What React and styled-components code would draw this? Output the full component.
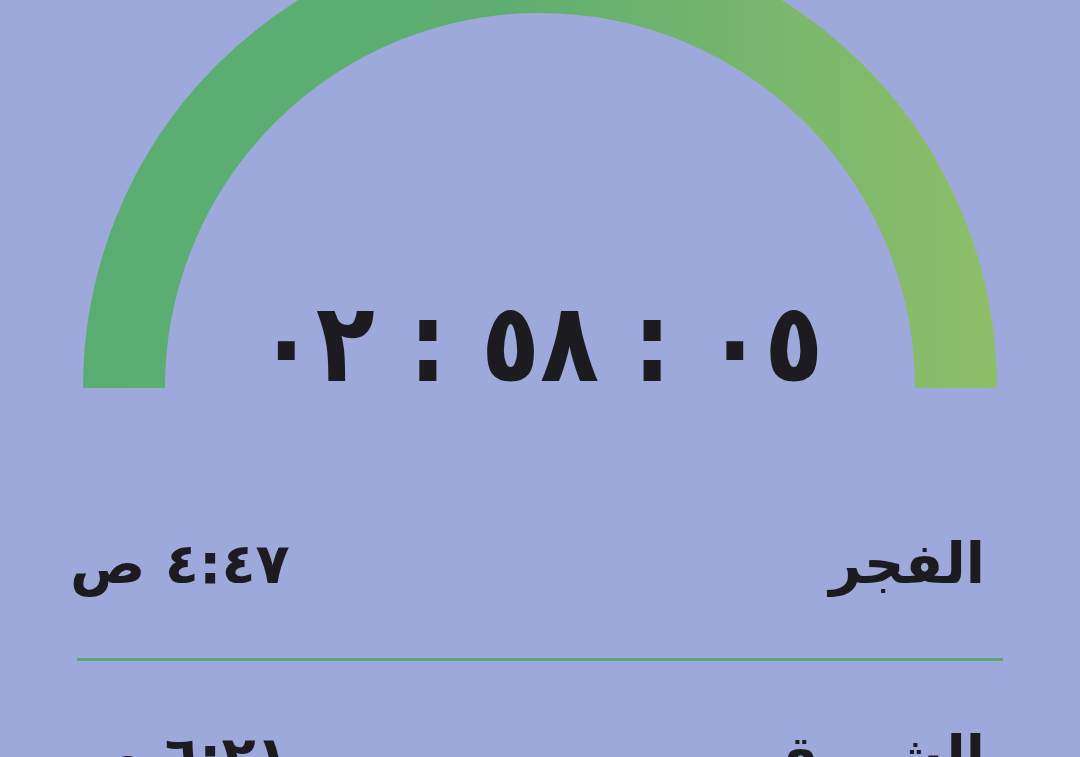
import React from "react";
import styled, { createGlobalStyle } from "styled-components";

const Global = createGlobalStyle`
  html, body {
    margin: 0;
    padding: 0;
    background: #9ea9db;
    overflow: hidden;
  }
  body {
    font-family: "DejaVu Sans", "Noto Sans", sans-serif;
    color: #1c1b20;
  }
`;

const Page = styled.div`
  width: 1080px;
  height: 757px;
  overflow: hidden;
  display: flex;
  flex-direction: column;
`;

const Gauge = styled.div`
  position: relative;
  height: 388px;
  flex-shrink: 0;

  svg {
    display: block;
  }
`;

const Countdown = styled.div`
  position: absolute;
  left: 0;
  right: 0;
  bottom: -10px;
  text-align: center;
  font-size: 110px;
  font-weight: 700;
  line-height: 1;
  direction: ltr;
  unicode-bidi: bidi-override;
  white-space: pre;
  transform: scaleX(0.88);
`;

const List = styled.div`
  direction: rtl;
  padding: 80px 77px 0;
  display: flex;
  flex-direction: column;
`;

const Row = styled.div`
  display: flex;
  justify-content: space-between;
  align-items: center;
  height: 190px;
  flex-shrink: 0;
  padding: 0 18px 0 0;
  margin-left: -7px;
`;

const Name = styled.span`
  font-size: 56px;
  font-weight: 700;
`;

const Time = styled.span`
  font-size: 56px;
  font-weight: 700;
`;

const Divider = styled.div`
  height: 3px;
  flex-shrink: 0;
  background: #5ea37c;
`;

const prayers = [
  { name: "الفجر", time: "٤:٤٧ ص" },
  { name: "الشروق", time: "٦:٢١ ص" },
];

export default function App() {
  return (
    <Page>
      <Global />
      <Gauge>
        <svg width="1080" height="388" viewBox="0 0 1080 388">
          <defs>
            <linearGradient id="arcGrad" x1="83" y1="0" x2="997" y2="0" gradientUnits="userSpaceOnUse">
              <stop offset="0" stopColor="#5aad72" />
              <stop offset="0.45" stopColor="#5eae71" />
              <stop offset="1" stopColor="#8ebe69" />
            </linearGradient>
          </defs>
          <path
            d="M 124 388 A 416 416 0 0 1 956 388"
            fill="none"
            stroke="url(#arcGrad)"
            strokeWidth="82"
          />
        </svg>
        <Countdown>{"٠٢ : ٥٨ : ٠٥"}</Countdown>
      </Gauge>
      <List>
        {prayers.map((p, i) => (
          <React.Fragment key={p.name}>
            {i > 0 && <Divider />}
            <Row>
              <Name>{p.name}</Name>
              <Time>{p.time}</Time>
            </Row>
          </React.Fragment>
        ))}
      </List>
    </Page>
  );
}
